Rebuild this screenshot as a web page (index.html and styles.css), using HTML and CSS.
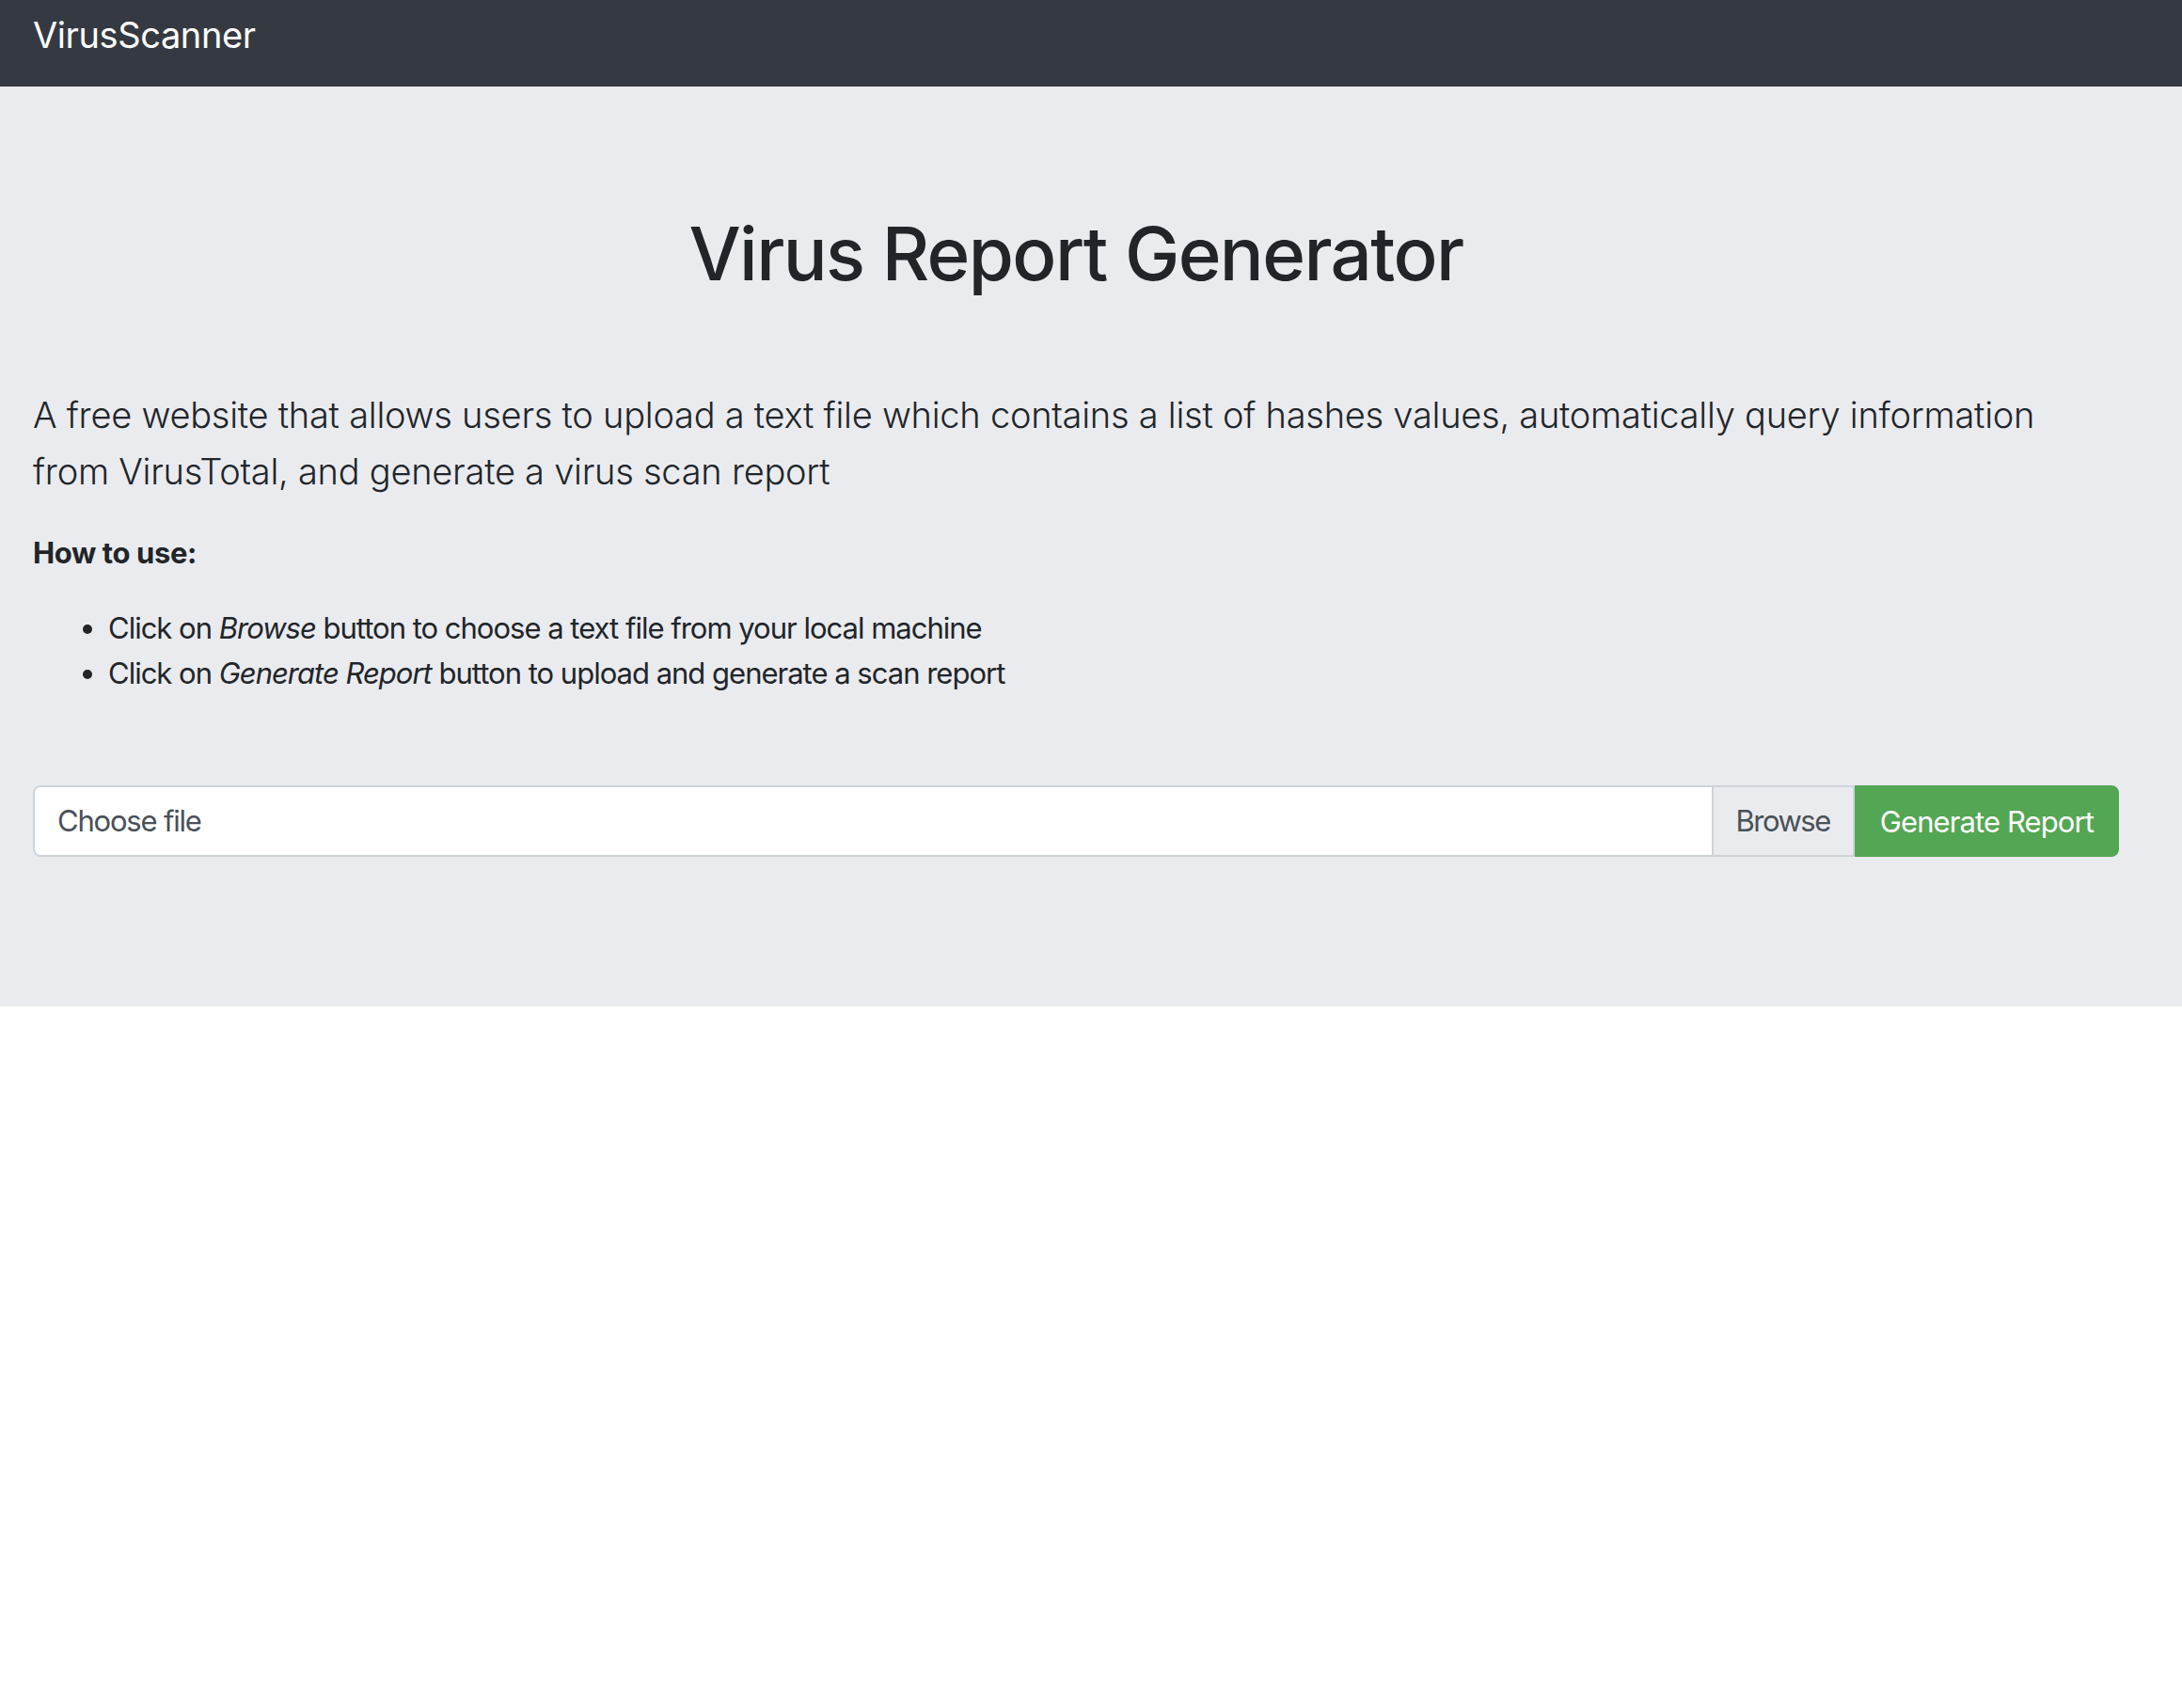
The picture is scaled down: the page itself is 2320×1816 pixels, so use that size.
FILE: index.html
```html
<!DOCTYPE html>
<html lang="en">
<head>
<meta charset="utf-8">
<title>VirusScanner</title>
<link rel="stylesheet" href="styles.css">
</head>
<body>
<nav class="navbar">
  <a class="brand" href="#">VirusScanner</a>
</nav>
<main class="jumbotron">
  <h1 class="title">Virus Report Generator</h1>
  <p class="lead">A free website that allows users to upload a text file which contains a list of hashes values, automatically query information from VirusTotal, and generate a virus scan report</p>
  <p class="howto">How to use:</p>
  <ul class="steps">
    <li>Click on <em>Browse</em> button to choose a text file from your local machine</li>
    <li>Click on <em>Generate Report</em> button to upload and generate a scan report</li>
  </ul>
  <form class="upload">
    <label class="file">
      <span class="file-name">Choose file</span>
      <span class="file-browse">Browse</span>
    </label>
    <button type="button" class="btn-generate">Generate Report</button>
  </form>
</main>
</body>
</html>
```
FILE: styles.css
```css
html, body {
  margin: 0;
  padding: 0;
  background: #ffffff;
}
body {
  font-family: Inter, "Noto Sans", "Liberation Sans", sans-serif;
  font-size: 31px;
  line-height: 48px;
  color: #212529;
}
.navbar {
  background: #353941;
  height: 92px;
  box-sizing: border-box;
  padding: 7px 35px 0 35px;
  display: flex;
  align-items: flex-start;
}
.brand {
  color: #ffffff;
  text-decoration: none;
  font-size: 38px;
  line-height: 60px;
  letter-spacing: -0.4px;
}
.jumbotron {
  background: #eaebef;
  padding: 130px 67px 159px 35px;
}
.title {
  margin: 0 0 93px 0;
  font-size: 78px;
  font-weight: 500;
  line-height: 96px;
  text-align: center;
  letter-spacing: -1.6px;
}
.lead {
  margin: 0 0 33px 0;
  font-size: 38px;
  font-weight: 300;
  line-height: 60px;
  letter-spacing: -0.25px;
}
.howto {
  margin: 0 0 32px 0;
  font-weight: 700;
  letter-spacing: -0.4px;
}
.steps {
  margin: 0;
  padding-left: 80px;
  letter-spacing: -1px;
}
.upload {
  margin: 95px 0 0 0;
  display: flex;
  height: 76px;
}
.file {
  flex: 1;
  display: flex;
  border: 2px solid #ced4da;
  border-radius: 8px 0 0 8px;
  background: #ffffff;
  color: #495057;
  overflow: hidden;
}
.file-name {
  flex: 1;
  padding: 0 24px;
  line-height: 72px;
  letter-spacing: -1.2px;
}
.file-browse {
  background: #eaebef;
  border-left: 2px solid #ced4da;
  padding: 0 24px 0 23px;
  line-height: 72px;
  letter-spacing: -1.5px;
}
.btn-generate {
  font-family: inherit;
  font-size: 31px;
  color: #ffffff;
  background: #53a653;
  border: 2px solid #53a653;
  border-radius: 0 8px 8px 0;
  padding: 0 25px;
  height: 76px;
  letter-spacing: -0.9px;
  cursor: pointer;
}
```
